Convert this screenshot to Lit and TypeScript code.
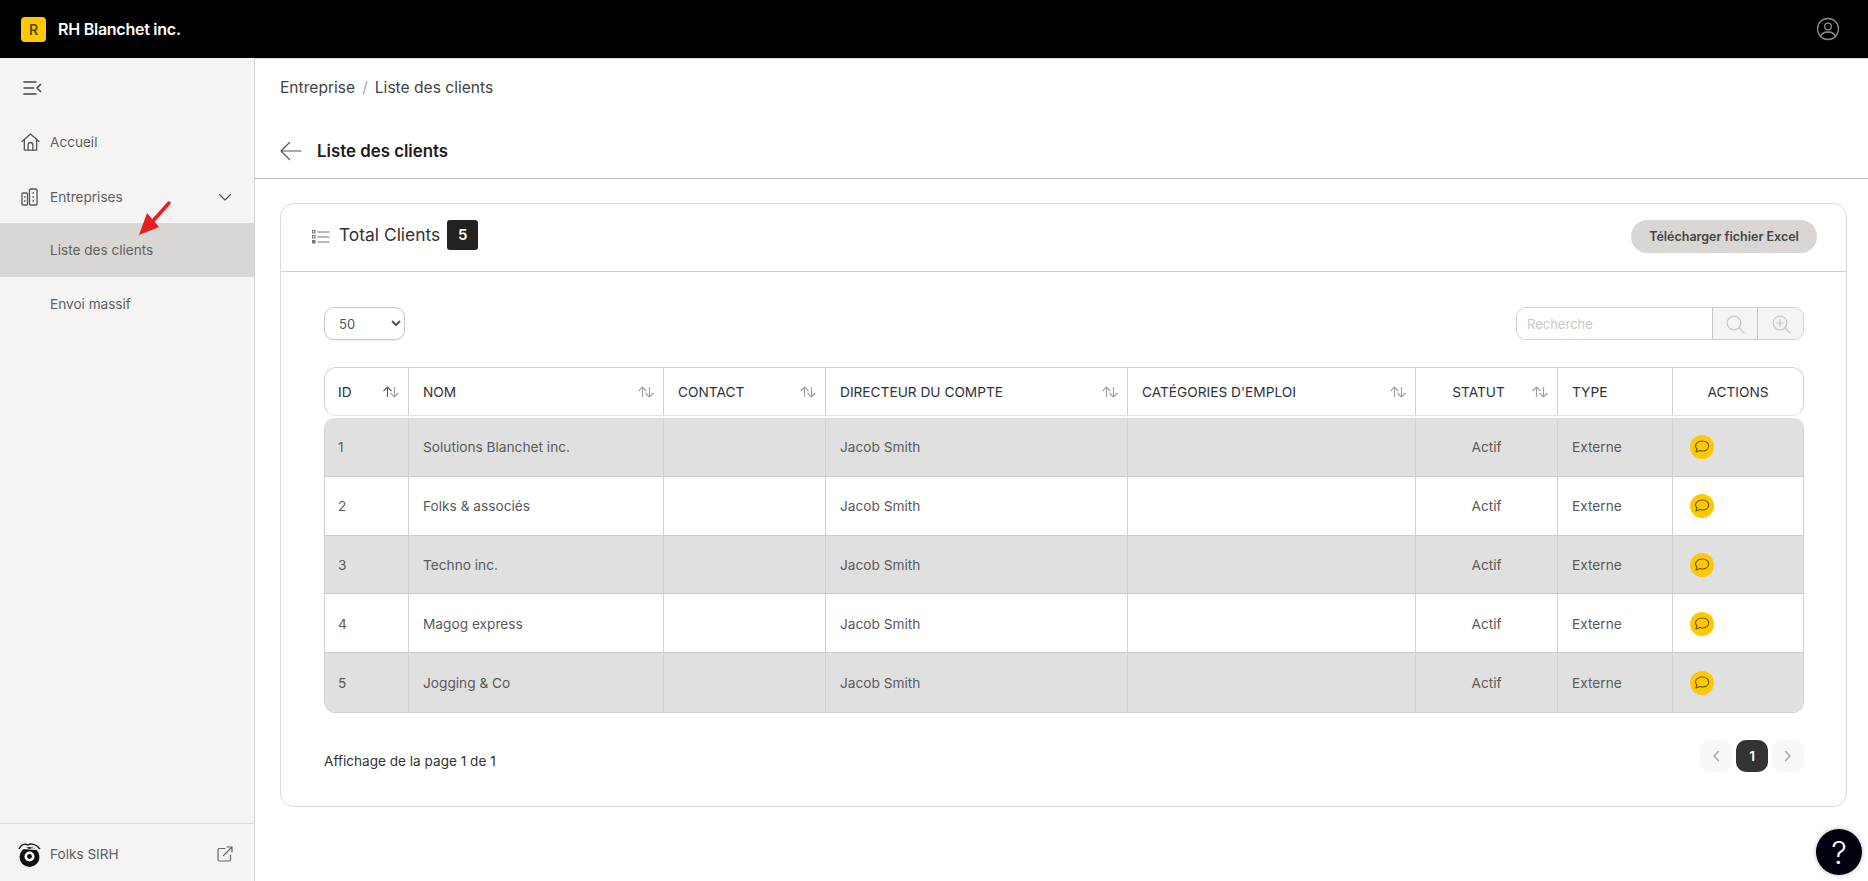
import { LitElement, html, css, svg } from 'lit';
import { customElement } from 'lit/decorators.js';

const clients = [
  { id: 1, name: 'Solutions Blanchet inc.' },
  { id: 2, name: 'Folks & associés' },
  { id: 3, name: 'Techno inc.' },
  { id: 4, name: 'Magog express' },
  { id: 5, name: 'Jogging & Co' },
];

const columns = [
  { label: 'ID', sort: true, dark: true },
  { label: 'NOM', sort: true },
  { label: 'CONTACT', sort: true },
  { label: 'DIRECTEUR DU COMPTE', sort: true },
  { label: "CATÉGORIES D'EMPLOI", sort: true },
  { label: 'STATUT', sort: true, center: true },
  { label: 'TYPE' },
  { label: 'ACTIONS', center: true },
];

const icon = (size: number, body: unknown, vb = 24) => html`<svg
  width=${size}
  height=${size}
  viewBox="0 0 ${vb} ${vb}"
  fill="none"
  stroke="currentColor"
  stroke-linecap="round"
  stroke-linejoin="round"
>${body}</svg>`;

const sortIcon = (dark = false) => html`<svg
  class="sort ${dark ? 'dark' : ''}"
  width="16"
  height="12"
  viewBox="0 0 16 12"
  fill="none"
  stroke="currentColor"
  stroke-width="1.1"
>
  <path d="M4.5 11V1M.5 5l4-4 4 4" />
  <path class="down" d="M11.5 1v10M7.5 7l4 4 4-4" />
</svg>`;

@customElement('app-root')
export class AppRoot extends LitElement {
  static styles = css`
    :host {
      display: block;
      height: 100vh;
      overflow: hidden;
      font-family: Inter, 'Liberation Sans', sans-serif;
      color: #333;
      background: #fff;
      position: relative;
    }
    .layout {
      display: grid;
      grid-template-rows: 58px 1fr;
      height: 100%;
    }
    .topbar {
      background: #000;
      display: flex;
      align-items: center;
      padding: 0 28px 0 21px;
      gap: 12px;
      color: #fff;
    }
    .logo {
      width: 25px;
      height: 25px;
      border-radius: 4px;
      background: #ffc800;
      color: #5a4a08;
      font-size: 14px;
      font-weight: 600;
      display: grid;
      place-items: center;
    }
    .brand {
      font-size: 16px;
      font-weight: 600;
      flex: 1;
      letter-spacing: -0.25px;
    }
    .user {
      color: #8d8d8d;
      display: flex;
    }
    .content {
      display: grid;
      grid-template-columns: 255px 1fr;
      min-height: 0;
    }
    .sidebar {
      background: #f5f4f2;
      border-right: 1px solid #d4d4d4;
      display: flex;
      flex-direction: column;
      position: relative;
      font-size: 13.6px;
      color: #5f5f5f;
    }
    .toggle {
      height: 59px;
      padding-left: 23px;
      display: flex;
      align-items: center;
      color: #444;
    }
    .nav {
      flex: 1;
    }
    .item {
      height: 54px;
      box-sizing: border-box;
      display: flex;
      align-items: center;
      padding-left: 50px;
      position: relative;
    }
    .item.first {
      margin-top: -2px;
    }
    .item.group {
      padding-top: 2px;
    }
    .item svg.lead {
      position: absolute;
      left: 21px;
      color: #555;
    }
    .item .chev {
      position: absolute;
      right: 21px;
      color: #555;
      display: flex;
    }
    .item.active {
      background: #d9d6d3;
    }
    .arrow {
      position: absolute;
      left: 134px;
      top: 137px;
    }
    .side-foot {
      height: 58px;
      box-sizing: border-box;
      border-top: 1px solid #dcdbd9;
      display: flex;
      align-items: center;
      padding: 3px 21px 0 17px;
      gap: 8px;
    }
    .side-foot span {
      flex: 1;
    }
    .side-foot svg.ext {
      color: #666;
    }
    .main {
      border-top: 1px solid #d4d4d4;
      min-width: 0;
    }
    .crumbs {
      padding: 17px 0 0 25px;
      height: 24px;
      font-size: 15.6px;
      line-height: 24px;
      color: #444;
      display: flex;
      gap: 7px;
    }
    .crumbs i {
      font-style: normal;
      color: #aaa;
    }
    .title {
      margin-top: 39px;
      padding: 0 0 15px 25px;
      height: 24px;
      border-bottom: 1px solid #bdbdbd;
      display: flex;
      align-items: center;
      gap: 15px;
      font-size: 16.85px;
      font-weight: 600;
      color: #1c1c1c;
    }
    .title svg {
      color: #555;
    }
    .card {
      margin: 24px 21px 0 25px;
      border: 1px solid #ddd8d6;
      border-radius: 14px;
    }
    .card-head {
      height: 68px;
      box-sizing: border-box;
      border-bottom: 1px solid #cfcfcf;
      display: flex;
      align-items: center;
      padding: 0 29px 2px 31px;
      gap: 6px;
    }
    .card-head svg {
      color: #777;
    }
    .card-head h2 {
      margin: 0 0 0 3px;
      font-size: 17.4px;
      font-weight: 400;
      color: #333;
      position: relative;
      top: -2px;
    }
    .count {
      background: #222;
      color: #fff;
      width: 31px;
      height: 30px;
      border-radius: 3px;
      display: grid;
      place-items: center;
      font-size: 15px;
      font-weight: 600;
      margin-left: 1px;
      position: relative;
      top: -2px;
    }
    .excel {
      margin-left: auto;
      height: 33px;
      width: 186px;
      border: 0;
      border-radius: 17px;
      background: #d9d6d3;
      color: #444;
      font: 600 12.5px Inter, 'Liberation Sans', sans-serif;
      padding: 0;
    }
    .card-body {
      padding: 35px 42px 34px 43px;
    }
    .filters {
      display: flex;
      justify-content: space-between;
      height: 33px;
      margin-bottom: 27px;
    }
    select {
      width: 81px;
      height: 33px;
      border: 1px solid #c9c9c9;
      border-radius: 10px;
      background: #fff;
      color: #555;
      font: 13px Inter, 'Liberation Sans', sans-serif;
      padding: 0 10px;
      box-shadow: 0 1px 1px rgba(0, 0, 0, 0.08);
    }
    .search {
      display: grid;
      grid-template-columns: 195px 45px 46px;
      border: 1px solid #cfcfcf;
      border-radius: 10px;
      overflow: hidden;
      box-sizing: border-box;
      height: 33px;
    }
    .search input {
      border: 0;
      outline: 0;
      min-width: 0;
      padding: 0 10px;
      font: 13px Inter, 'Liberation Sans', sans-serif;
      background: #fff;
    }
    .search input::placeholder {
      color: #cdc8c5;
    }
    .search div {
      background: #f5f4f2;
      border-left: 1px solid #c4c4c4;
      display: grid;
      place-items: center;
      color: #c9c5c2;
    }
    .row {
      display: grid;
      grid-template-columns: 84px 255px 162px 302px 288px 142px 115px 130px;
    }
    .thead {
      height: 49px;
      box-sizing: border-box;
      border: 1px solid #d2d2d2;
      border-bottom-color: #e6e6e6;
      border-radius: 12px;
      margin-bottom: 2px;
      color: #2e3338;
      font-size: 13.7px;
      font-weight: 400;
    }
    .tbody {
      border: 1px solid #d0d0d0;
      border-top: 0;
      border-radius: 10px 10px 12px 12px;
      overflow: hidden;
      font-size: 13.7px;
      color: #5a5a5a;
      box-sizing: border-box;
    }
    .thead > div,
    .tbody .row > div {
      border-right: 1px solid #d2d2d2;
      padding: 0 14px;
      display: flex;
      align-items: center;
      justify-content: space-between;
      min-width: 0;
    }
    .tbody .row > div {
      padding-top: 1px;
    }
    .thead > div:first-child,
    .tbody .row > div:first-child {
      padding-left: 13px;
    }
    .thead > div:last-child,
    .tbody .row > div:last-child {
      border-right: 0;
    }
    .thead > div.center {
      justify-content: center;
      position: relative;
    }
    .thead > div.center:has(.sort) {
      padding-right: 30px;
    }
    .thead > div.center .sort {
      position: absolute;
      right: 9px;
      margin: 0;
    }
    .tbody .row > div.center {
      justify-content: center;
    }
    .tbody .row {
      height: 58.75px;
      box-sizing: border-box;
      border-bottom: 1px solid #cdcdcd;
    }
    .tbody .row:last-child {
      border-bottom: 0;
    }
    .tbody .row:nth-child(odd) {
      background: #e0e0e0;
    }
    .sort {
      color: #9d9d9d;
      margin-right: -5px;
      flex: none;
    }
    .sort.dark {
      color: #555;
    }
    .sort .down {
      color: #9d9d9d;
    }
    .chat {
      width: 24px;
      height: 24px;
      border-radius: 50%;
      background: #ffc800;
      color: #6f5a08;
      display: grid;
      place-items: center;
      margin-left: 3px;
    }
    .foot {
      display: flex;
      justify-content: space-between;
      align-items: center;
      margin-top: 27px;
      height: 32px;
      font-size: 13.6px;
      color: #333;
    }
    .foot > span {
      padding-top: 10px;
    }
    .pager {
      display: flex;
      gap: 4px;
    }
    .pager div {
      width: 32px;
      height: 32px;
      border-radius: 10px;
      background: #f8f7f6;
      color: #aaa;
      display: grid;
      place-items: center;
    }
    .pager div.on {
      background: #333;
      color: #fff;
      font-size: 13.6px;
      font-weight: 600;
    }
    .help {
      position: absolute;
      right: 6px;
      bottom: 6px;
      width: 46px;
      height: 46px;
      border-radius: 50%;
      background: #00000f;
      color: #fff;
      display: grid;
      place-items: center;
      font-size: 31px;
      font-weight: 300;
      box-shadow: 0 0 4px rgba(0, 0, 0, 0.3);
    }
  `;

  private renderSidebar() {
    return html`<aside class="sidebar">
      <div class="toggle">
        ${icon(20, svg`<path stroke-width="1.6" d="M1 4h12M1 10h9.500M1 16h12M17.500 6.500 14 10l3.500 3.500" />`, 20)}
      </div>
      <nav class="nav">
        <div class="item first">
          <svg class="lead" width="19" height="18" viewBox="0 0 20 19" fill="none" stroke="currentColor" stroke-width="1.4" stroke-linejoin="round" stroke-linecap="round">
            <path d="M1 9 10 1l9 8M3.500 7V18h13V7" />
            <path d="M7.500 18v-5.500a2.500 2.500 0 0 1 5 0V18" />
          </svg>
          Accueil
        </div>
        <div class="item group">
          <svg class="lead" width="17" height="18" viewBox="0 0 17 18" fill="none" stroke="currentColor" stroke-width="1.3" stroke-linejoin="round">
            <rect x="1" y="5" width="5.500" height="12" rx="1" />
            <rect x="8.500" y="1" width="7.500" height="16" rx="1" />
            <path d="M3 9h1.500M3 13h1.500M11.500 5h1.500M11.500 9h1.500M11.500 13h1.500" />
          </svg>
          Entreprises
          <span class="chev">${icon(16, svg`<path stroke-width="1.2" d="M2.500 5.500 8 11l5.500-5.500" />`, 16)}</span>
        </div>
        <div class="item active">Liste des clients</div>
        <div class="item">Envoi massif</div>
      </nav>
      <svg class="arrow" width="40" height="42" viewBox="0 0 40 42">
        <path d="M35 8 18 27" stroke="#e81e1e" stroke-width="3.500" stroke-linecap="round" />
        <path d="M5 40 13 18 25 32Z" fill="#e81e1e" />
      </svg>
      <footer class="side-foot">
        <svg width="25" height="26" viewBox="0 0 25 26">
          <circle cx="12.500" cy="16" r="10" fill="#111" />
          <circle cx="12.500" cy="15.500" r="5" fill="#fff" />
          <circle cx="12.500" cy="15.500" r="2.400" fill="#111" />
          <path d="M2 8C5 2 9 3 11 4c3-2 8-1 12 4" fill="none" stroke="#222" stroke-width="1.400" />
          <path d="M5 8c3-2 5-1 7 0 3-1 5-1 8 1" fill="#fff" />
        </svg>
        <span>Folks SIRH</span>
        <svg class="ext" width="16" height="16" viewBox="0 0 16 16" fill="none" stroke="currentColor" stroke-width="1.200" stroke-linecap="round" stroke-linejoin="round">
          <path d="M8 2.500H2.500A1.500 1.500 0 0 0 1 4v9.500A1.500 1.500 0 0 0 2.500 15H12a1.500 1.500 0 0 0 1.500-1.500V9" />
          <path d="M6.500 9.500 15 1M10 1h5v5" />
        </svg>
      </footer>
    </aside>`;
  }

  private renderTable() {
    return html`
      <div class="row thead">
        ${columns.map(
          (c) => html`<div class="${c.center ? 'center' : ''}">
            <span>${c.label}</span>${c.sort ? sortIcon(c.dark) : ''}
          </div>`,
        )}
      </div>
      <div class="tbody">
        ${clients.map(
          (c) => html`<div class="row">
            <div>${c.id}</div>
            <div>${c.name}</div>
            <div></div>
            <div>Jacob Smith</div>
            <div></div>
            <div class="center">Actif</div>
            <div>Externe</div>
            <div>
              <span class="chat">
                ${icon(16, svg`<path stroke-width="1.200" d="M8.500 2c3.500 0 6.200 2 6.200 5s-2.700 5-6.200 5c-1 0-2-.2-2.800-.5L2 13l.9-3.200C2 9 1.500 8 1.500 7c0-3 3.200-5 7-5Z" />`, 16)}
              </span>
            </div>
          </div>`,
        )}
      </div>
    `;
  }

  render() {
    return html`<div class="layout">
      <header class="topbar">
        <div class="logo">R</div>
        <div class="brand">RH Blanchet inc.</div>
        <span class="user">
          <svg width="24" height="24" viewBox="0 0 24 24" fill="none" stroke="currentColor" stroke-width="1.300">
            <circle cx="12" cy="12" r="10.500" />
            <circle cx="12" cy="9.500" r="3.300" />
            <path d="M5 19.500c.5-3 3-4.500 7-4.500s6.500 1.500 7 4.500" />
          </svg>
        </span>
      </header>
      <div class="content">
        ${this.renderSidebar()}
        <main class="main">
          <div class="crumbs"><span>Entreprise</span><i>/</i><span>Liste des clients</span></div>
          <div class="title">
            ${icon(22, svg`<path stroke-width="1.200" d="M21 11H1.500M9.500 2.500 1 11l8.500 8.500" />`, 22)}
            <span>Liste des clients</span>
          </div>
          <section class="card">
            <div class="card-head">
              <svg width="18" height="14" viewBox="0 0 18 14" fill="none" stroke="currentColor" stroke-width="1">
                <rect x=".5" y=".5" width="2.500" height="2.500" />
                <rect x=".5" y="5.500" width="2.500" height="2.500" />
                <rect x=".5" y="10.500" width="2.500" height="2.500" fill="currentColor" />
                <path d="M5.500 2h12M5.500 7h12M5.500 12h12" />
              </svg>
              <h2>Total Clients</h2>
              <span class="count">5</span>
              <button class="excel">Télécharger fichier Excel</button>
            </div>
            <div class="card-body">
              <div class="filters">
                <select><option>50</option></select>
                <div class="search">
                  <input placeholder="Recherche" />
                  <div>
                    ${icon(20, svg`<circle cx="9" cy="9" r="6.800" stroke-width="1.200" /><path stroke-width="1.200" d="m14 14 5 5" />`, 20)}
                  </div>
                  <div>
                    ${icon(20, svg`<circle cx="9" cy="9" r="6.800" stroke-width="1.200" /><path stroke-width="1.200" d="m14 14 5 5M9 5.500v7M5.500 9h7" />`, 20)}
                  </div>
                </div>
              </div>
              ${this.renderTable()}
              <div class="foot">
                <span>Affichage de la page 1 de 1</span>
                <div class="pager">
                  <div>${icon(14, svg`<path stroke-width="1.500" d="M9.500 2.500 5 7l4.500 4.500" />`, 14)}</div>
                  <div class="on">1</div>
                  <div>${icon(14, svg`<path stroke-width="1.500" d="M4.500 2.500 9 7l-4.500 4.500" />`, 14)}</div>
                </div>
              </div>
            </div>
          </section>
        </main>
      </div>
    </div>
    <div class="help">?</div>`;
  }
}
